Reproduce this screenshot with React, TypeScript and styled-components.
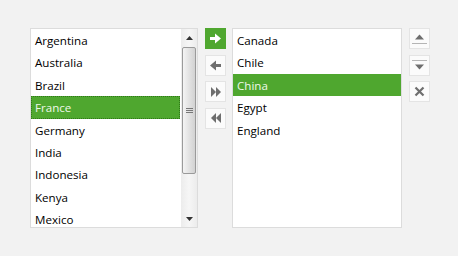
import React from "react";
import styled, { createGlobalStyle } from "styled-components";

const Global = createGlobalStyle`
  html, body { margin: 0; padding: 0; background: #f2f2f2; }
  body { font-family: "Open Sans", "Noto Sans", sans-serif; }
`;

const Page = styled.div`
  width: 458px;
  height: 256px;
  box-sizing: border-box;
  padding: 28px 0 0 30px;
  display: flex;
  align-items: flex-start;
  background: #f2f2f2;
`;

const ListBox = styled.div<{ $w: number; $ml?: number }>`
  width: ${(p) => p.$w}px;
  height: 200px;
  margin-left: ${(p) => p.$ml ?? 0}px;
  box-sizing: border-box;
  border: 1px solid #dcdcdc;
  background: #fff;
  display: flex;
  overflow: hidden;
`;

const Items = styled.ul`
  list-style: none;
  margin: 0;
  padding: 0;
  flex: 1;
  min-width: 0;
`;

const Item = styled.li<{ $sel?: boolean; $focus?: boolean }>`
  height: 22.4px;
  line-height: 22px;
  box-sizing: border-box;
  padding-left: 3px;
  font-size: 11.6px;
  color: ${(p) => (p.$sel ? "#eef8e8" : "#000")};
  background: ${(p) => (p.$sel ? "#4fa72f" : "transparent")};
  border: 1px ${(p) => (p.$focus ? "dotted #2f7a18" : "solid transparent")};
  white-space: nowrap;
`;

const ScrollBar = styled.div`
  width: 16px;
  margin-left: 1px;
  display: flex;
  flex-direction: column;
  align-items: center;
  background: linear-gradient(to right, #ececec, #f6f6f6 50%, #ececec);
`;

const ScrollArrow = styled.div`
  height: 17px;
  width: 100%;
  display: flex;
  align-items: center;
  justify-content: center;
`;

const Track = styled.div`
  flex: 1;
  width: 100%;
  display: flex;
  flex-direction: column;
  align-items: center;
`;

const Thumb = styled.div`
  margin-top: 1px;
  width: 14px;
  height: 127px;
  box-sizing: border-box;
  border: 1px solid #9a9a9a;
  border-radius: 2px;
  background: linear-gradient(to right, #f4f4f4, #e4e4e4 45%, #d2d2d2);
  display: flex;
  align-items: center;
  justify-content: center;
`;

const ButtonColumn = styled.div<{ $ml: number }>`
  margin-left: ${(p) => p.$ml}px;
  display: flex;
  flex-direction: column;
  gap: 5.5px;
`;

const ToolButton = styled.button<{ $primary?: boolean }>`
  width: 21px;
  height: 21px;
  padding: 0;
  margin: 0;
  box-sizing: border-box;
  border: 1px solid ${(p) => (p.$primary ? "#4fa72f" : "#e4e4e4")};
  background: ${(p) => (p.$primary ? "#4fa72f" : "#fbfbfb")};
  display: flex;
  align-items: center;
  justify-content: center;
  cursor: pointer;
`;

const left = ["Argentina", "Australia", "Brazil", "France", "Germany", "India", "Indonesia", "Kenya", "Mexico"];
const right = ["Canada", "Chile", "China", "Egypt", "England"];

const G = "#6e6e6e";

const IconRight = ({ c }: { c: string }) => (
  <svg width="13" height="11" viewBox="0 0 13 11">
    <rect x="1" y="4" width="6" height="3" fill={c} />
    <polygon points="6,0.5 12,5.5 6,10.5" fill={c} />
  </svg>
);
const IconLeft = ({ c }: { c: string }) => (
  <svg width="13" height="11" viewBox="0 0 13 11">
    <rect x="6" y="4" width="6" height="3" fill={c} />
    <polygon points="7,0.5 1,5.5 7,10.5" fill={c} />
  </svg>
);
const IconDoubleRight = () => (
  <svg width="12" height="10" viewBox="0 0 12 10">
    <polygon points="1,0 6,5 1,10" fill={G} />
    <polygon points="6,0 11,5 6,10" fill={G} />
  </svg>
);
const IconDoubleLeft = () => (
  <svg width="12" height="10" viewBox="0 0 12 10">
    <polygon points="6,0 1,5 6,10" fill={G} />
    <polygon points="11,0 6,5 11,10" fill={G} />
  </svg>
);
const IconUp = () => (
  <svg width="15" height="12" viewBox="0 0 15 12">
    <polygon points="7.5,1.5 12,6.5 3,6.5" fill={G} />
    <line x1="0.5" y1="10.5" x2="15" y2="10.5" stroke={G} strokeWidth="1" strokeDasharray="1 1" />
  </svg>
);
const IconDown = () => (
  <svg width="15" height="12" viewBox="0 0 15 12">
    <line x1="0.5" y1="1.5" x2="15" y2="1.5" stroke={G} strokeWidth="1" strokeDasharray="1 1" />
    <polygon points="3,5.5 12,5.5 7.5,10.5" fill={G} />
  </svg>
);
const IconX = () => (
  <svg width="11" height="11" viewBox="0 0 11 11">
    <path d="M1.5 1.5 L9.5 9.5 M9.5 1.5 L1.5 9.5" stroke={G} strokeWidth="2.2" />
  </svg>
);

const SmallUp = () => (
  <svg width="7" height="4" viewBox="0 0 7 4">
    <polygon points="3.5,0 7,4 0,4" fill="#333" />
  </svg>
);
const SmallDown = () => (
  <svg width="7" height="4" viewBox="0 0 7 4">
    <polygon points="0,0 7,0 3.5,4" fill="#333" />
  </svg>
);
const Grip = () => (
  <svg width="7" height="6" viewBox="0 0 7 6">
    <rect x="0" y="0" width="7" height="1" fill="#777" />
    <rect x="0" y="2" width="7" height="1" fill="#777" />
    <rect x="0" y="4" width="7" height="1" fill="#777" />
  </svg>
);

export default function App() {
  return (
    <>
      <Global />
      <Page>
        <ListBox $w={168}>
          <Items>
            {left.map((n) => (
              <Item key={n} $sel={n === "France"} $focus={n === "France"}>
                {n}
              </Item>
            ))}
          </Items>
          <ScrollBar>
            <ScrollArrow>
              <SmallUp />
            </ScrollArrow>
            <Track>
              <Thumb>
                <Grip />
              </Thumb>
            </Track>
            <ScrollArrow>
              <SmallDown />
            </ScrollArrow>
          </ScrollBar>
        </ListBox>
        <ButtonColumn $ml={7}>
          <ToolButton $primary aria-label="Move right">
            <IconRight c="#ffffff" />
          </ToolButton>
          <ToolButton aria-label="Move left">
            <IconLeft c={G} />
          </ToolButton>
          <ToolButton aria-label="Move all right">
            <IconDoubleRight />
          </ToolButton>
          <ToolButton aria-label="Move all left">
            <IconDoubleLeft />
          </ToolButton>
        </ButtonColumn>
        <ListBox $w={170} $ml={6}>
          <Items>
            {right.map((n) => (
              <Item key={n} $sel={n === "China"}>
                {n}
              </Item>
            ))}
          </Items>
        </ListBox>
        <ButtonColumn $ml={7}>
          <ToolButton aria-label="Move up">
            <IconUp />
          </ToolButton>
          <ToolButton aria-label="Move down">
            <IconDown />
          </ToolButton>
          <ToolButton aria-label="Remove">
            <IconX />
          </ToolButton>
        </ButtonColumn>
      </Page>
    </>
  );
}
